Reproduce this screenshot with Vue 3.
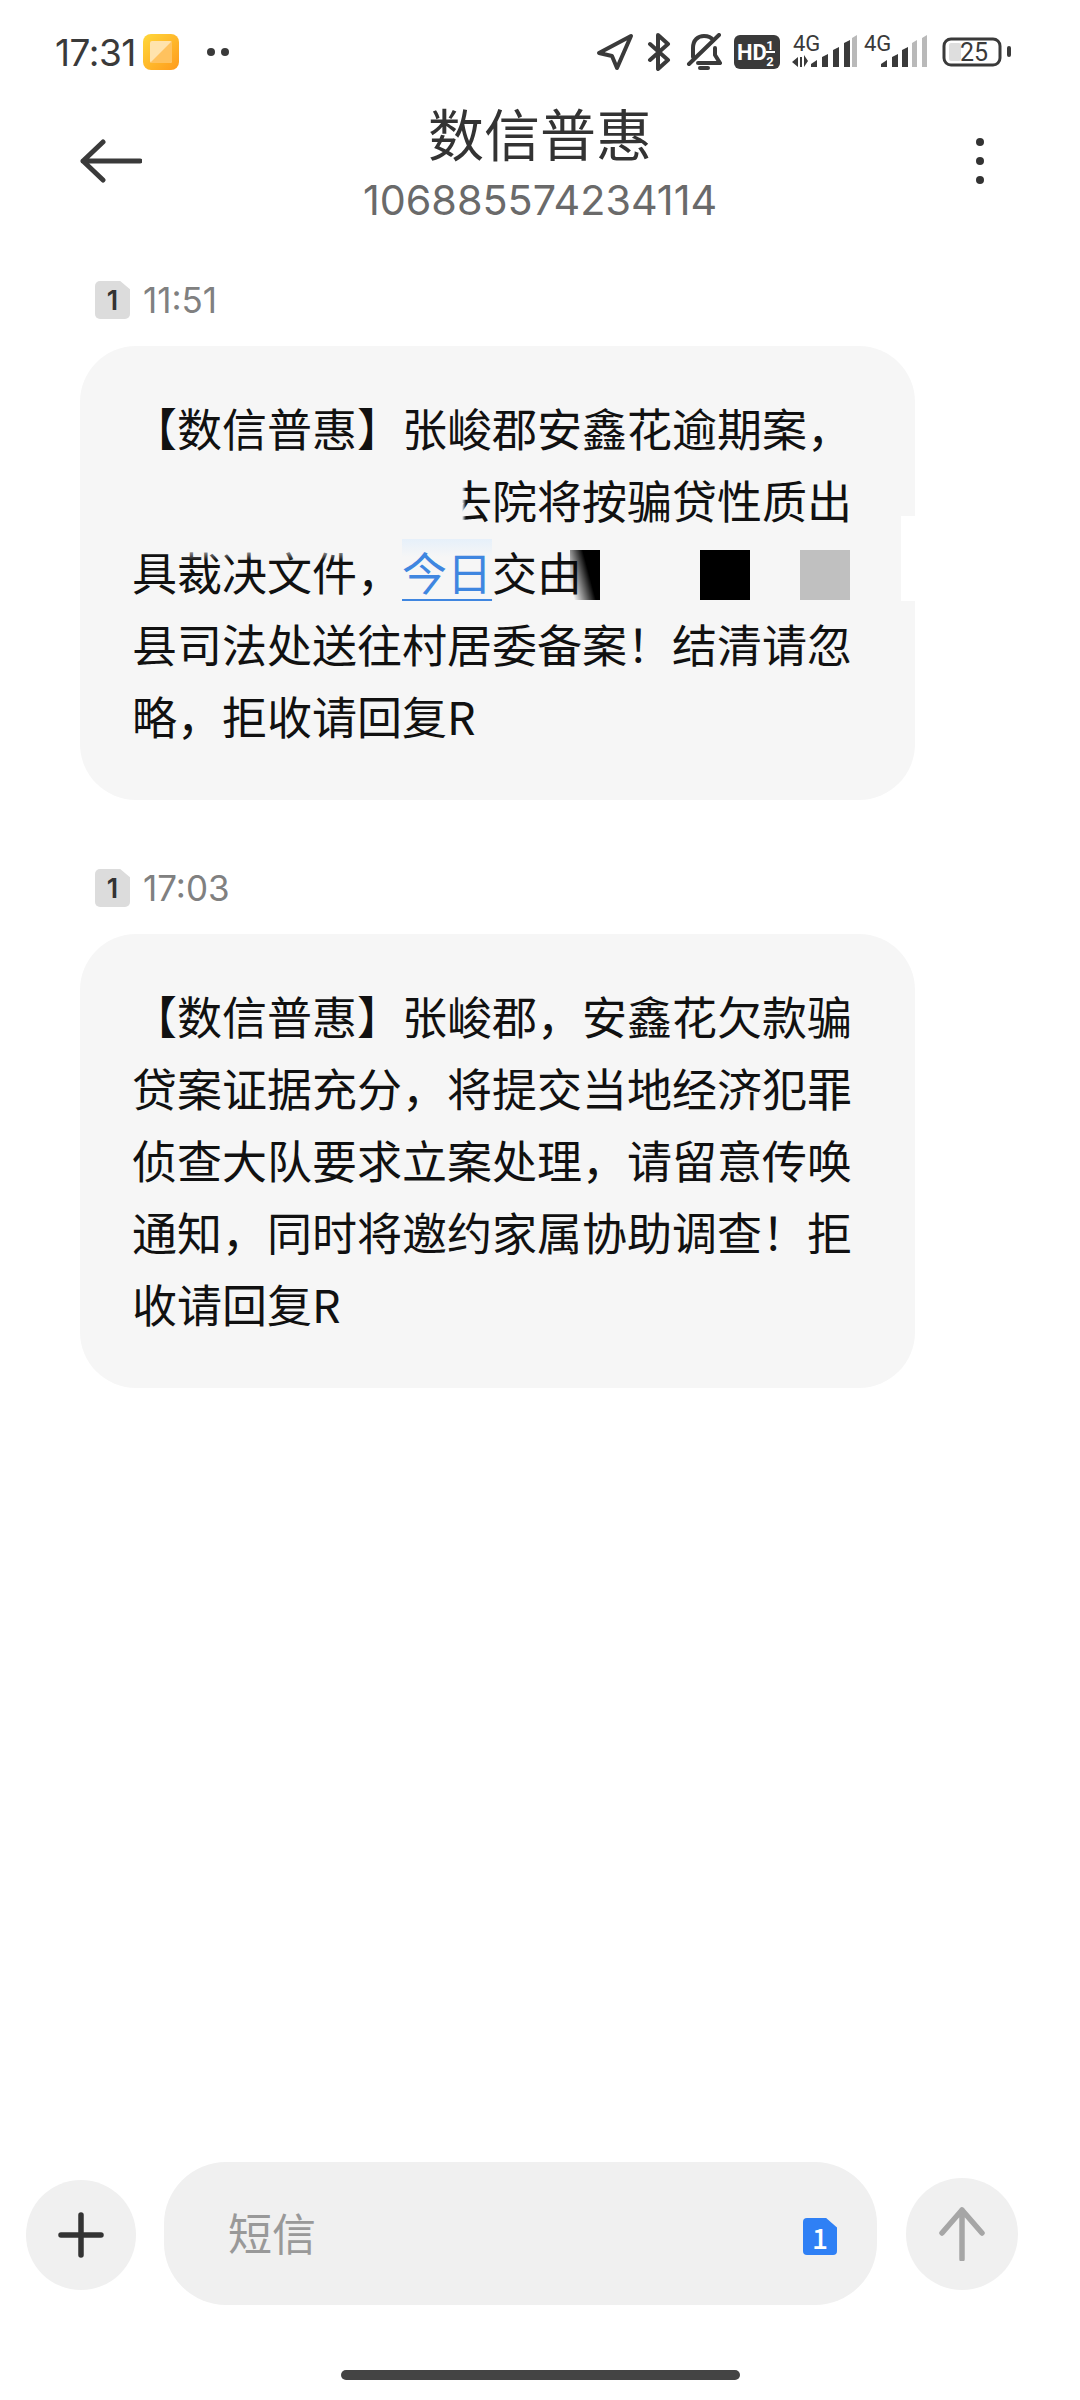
<template>
  <div class="screen">
    <div class="status">
      <span class="clock">17:31</span>
      <svg class="notes" width="36" height="36" viewBox="0 0 36 36">
        <defs>
          <linearGradient id="noteBg" x1="0" y1="0" x2="1" y2="1">
            <stop offset="0" stop-color="#ffd83a" />
            <stop offset="1" stop-color="#ff9a1c" />
          </linearGradient>
        </defs>
        <rect width="36" height="36" rx="8" fill="url(#noteBg)" />
        <rect x="7" y="7" width="22" height="22" rx="2" fill="#ffe3ad" />
        <path d="M7 29 L29 7 L29 27 Q29 29 27 29 Z" fill="#ffc25e" />
      </svg>
      <span class="dot"></span>
      <span class="dot"></span>

      <div class="status-right">
        <svg width="38" height="38" viewBox="0 0 38 38" fill="none" stroke="#3a3a3a" stroke-width="4" stroke-linejoin="round">
          <path d="M3 20 L35 3 L21 35 L16 23 Z" />
        </svg>
        <svg class="ml" width="24" height="38" viewBox="0 0 24 38" fill="none" stroke="#3a3a3a" stroke-width="4" stroke-linecap="round" stroke-linejoin="round">
          <path d="M3 11 L21 27 L11 36 L11 2 L21 11 L3 27" />
        </svg>
        <svg class="ml2" width="36" height="38" viewBox="0 0 36 38" fill="none" stroke="#3a3a3a" stroke-width="4" stroke-linecap="round" stroke-linejoin="round">
          <path d="M7 24 L7 15 C7 7 12 3 18 3 C22 3 25 4 27 7" />
          <path d="M29 15 L29 22 L34 30 L12 30" />
          <path d="M3 31 L33 2" />
          <path d="M14 35 L22 35" />
        </svg>
        <svg class="ml-hd" width="46" height="34" viewBox="0 0 46 34">
          <rect width="46" height="34" rx="6" fill="#3a3a3a" />
          <text x="3" y="25" class="hd">HD</text>
          <text x="36" y="15" class="hd-small">1</text>
          <rect x="32" y="16" width="9" height="2" fill="#fff" />
          <text x="36" y="31" class="hd-small">2</text>
        </svg>
        <svg class="ml3" width="65" height="44" viewBox="0 -4 65 44">
          <text x="1" y="17" class="net">4G</text>
          <path d="M6 23 V33 L0 28 Z M12 21 V33 L16 27 Z" fill="#3a3a3a" />
          <rect x="8" y="23" width="2" height="10" fill="#3a3a3a" />
          <path d="M19 30 L25 26 V33 H19 Z M30 23 L36 20 V33 H30 Z M41 16 L47 13 V33 H41 Z M52 9 L58 6 V33 H52 Z" fill="#3a3a3a" />
          <path d="M60 4 L65 1 V33 H60 Z" fill="#b9b9b9" />
        </svg>
        <svg class="ml4" width="64" height="44" viewBox="0 -4 64 44">
          <text x="1" y="17" class="net">4G</text>
          <path d="M18 30 L24 26 V33 H18 Z M29 23 L35 20 V33 H29 Z M39 16 L45 13 V33 H39 Z" fill="#3a3a3a" />
          <path d="M49 9 L54 6 V33 H49 Z M59 4 L64 1 V33 H59 Z" fill="#b9b9b9" />
        </svg>
        <svg class="ml5" width="69" height="30" viewBox="0 0 69 30">
          <rect x="2" y="2" width="56" height="26" rx="7" fill="none" stroke="#3a3a3a" stroke-width="3" />
          <rect x="7" y="6" width="12" height="18" rx="2" fill="#dedede" />
          <text x="32" y="24" class="bat">25</text>
          <rect x="65" y="9" width="4" height="11" rx="2" fill="#3a3a3a" />
        </svg>
      </div>
    </div>

    <div class="header">
      <svg class="back" width="62" height="44" viewBox="0 0 62 44" fill="none" stroke="#3a3a3a" stroke-width="5" stroke-linecap="round" stroke-linejoin="round">
        <path d="M60 22 H3 M23 3 L3 22 L23 41" />
      </svg>
      <div class="title-box">
        <div class="title">数信普惠</div>
        <div class="number">106885574234114</div>
      </div>
      <div class="more">
        <span></span><span></span><span></span>
      </div>
    </div>

    <div class="msg-list">
      <div class="msg">
        <div class="stamp">
          <span class="sim">1</span>
          <span>11:51</span>
        </div>
        <div class="bubble">
          <div class="line">【数信普惠】张峻郡安鑫花逾期案，</div>
          <div class="line blanked">去院将按骗贷性质出</div>
          <div class="line">具裁决文件，<span class="link">今日</span>交由</div>
          <div class="line">县司法处送往村居委备案！结清请忽</div>
          <div class="line">略，拒收请回复R</div>
          <!-- redaction marks left on the screenshot -->
          <span class="mask mask-fade"></span>
          <span class="mask mask-strip"></span>
          <span class="mask mask-black1"></span>
          <span class="mask mask-black2"></span>
          <span class="mask mask-grey"></span>
          <span class="mask mask-white"></span>
        </div>
      </div>

      <div class="msg">
        <div class="stamp">
          <span class="sim">1</span>
          <span>17:03</span>
        </div>
        <div class="bubble">
          <div v-for="(l, i) in secondLines" :key="i" class="line">{{ l }}</div>
        </div>
      </div>
    </div>

    <div class="composer">
      <button class="round plus">
        <svg width="46" height="46" viewBox="0 0 46 46" stroke="#333" stroke-width="5.5" stroke-linecap="round">
          <path d="M23 3 V43 M3 23 H43" />
        </svg>
      </button>
      <div class="input">
        <span class="placeholder">短信</span>
        <span class="sim-blue">1</span>
      </div>
      <button class="round send">
        <svg width="46" height="54" viewBox="0 0 46 54" fill="none" stroke="#a6a6a6" stroke-width="5.5" stroke-linecap="round" stroke-linejoin="round">
          <path d="M23 52 V3 M3 26 L23 3 L43 26" />
        </svg>
      </button>
    </div>
    <div class="home-bar"></div>
  </div>
</template>

<script setup>
const secondLines = [
  '【数信普惠】张峻郡，安鑫花欠款骗',
  '贷案证据充分，将提交当地经济犯罪',
  '侦查大队要求立案处理，请留意传唤',
  '通知，同时将邀约家属协助调查！拒',
  '收请回复R',
];
</script>

<style>
html, body { background: #fff; }
</style>

<style scoped>
.screen { width: 1080px; height: 2400px; display: flex; flex-direction: column; overflow: hidden; background: #fff; font-family: "Noto Sans CJK SC", "Noto Sans", sans-serif; }

.status { height: 104px; display: flex; align-items: center; padding: 0 69px 0 55px; color: #3a3a3a; }
.clock { font-family: Inter, sans-serif; font-size: 37px; line-height: 1; letter-spacing: -0.5px; }
.notes { margin-left: 7px; }
.dot { width: 8px; height: 8px; border-radius: 50%; background: #3a3a3a; margin-left: 6px; }
.notes + .dot { margin-left: 28px; }
.status-right { margin-left: auto; display: flex; align-items: center; }
.ml { margin-left: 13px; }
.ml2 { margin-left: 15px; }
.ml-hd { margin-left: 12px; }
.ml3 { margin-left: 12px; }
.ml4 { margin-left: 6px; }
.ml5 { margin-left: 15px; }
.hd { font: 700 22px Roboto, sans-serif; fill: #fff; }
.hd-small { font: 700 13px Roboto, sans-serif; fill: #fff; text-anchor: middle; }
.net { font: 400 22px Roboto, sans-serif; fill: #3a3a3a; }
.bat { font: 400 25px Roboto, sans-serif; fill: #3a3a3a; text-anchor: middle; }

.header { height: 150px; display: grid; grid-template-columns: 1fr auto 1fr; align-items: center; padding: 0 80px; }
.back { margin-top: -36px; }
.title-box { align-self: start; text-align: center; margin-top: -6px; }
.title { font-size: 56px; line-height: 68px; color: #333; }
.number { font-family: Inter, sans-serif; font-size: 41.3px; line-height: 50px; color: #6a6a6a; margin-top: 9px; }
.more { justify-self: end; display: flex; flex-direction: column; gap: 11px; margin: -36px 16px 0 0; }
.more span { width: 8px; height: 8px; border-radius: 50%; background: #333; }

.msg-list { padding: 27px 0 0 80px; display: flex; flex-direction: column; gap: 69px; }
.stamp { display: flex; align-items: center; height: 38px; padding-left: 15px; gap: 13px; color: #808080; font-family: Inter, sans-serif; font-size: 35px; }
.sim { width: 35px; height: 38px; display: flex; align-items: center; justify-content: center; background: #dcdcdc; color: #333; font-size: 27px; font-weight: 600; border-radius: 5px; clip-path: polygon(0 0, 72% 0, 100% 22%, 100% 100%, 0 100%); }
.bubble { position: relative; width: 835px; height: 454px; margin-top: 27px; padding: 46px 0 0 52px; box-sizing: border-box; background: #f6f6f6; border-radius: 56px; }
.line { height: 72px; line-height: 72px; font-size: 45px; color: #111; white-space: nowrap; }
.blanked { padding-left: 7em; }
.link { color: #3f86e0; text-decoration: underline; text-underline-offset: 8px; text-decoration-thickness: 2px; background: linear-gradient(180deg, #e6f0fa, rgba(230, 240, 250, 0) 28%); }

.mask { position: absolute; }
.mask-fade { left: 360px; top: 122px; width: 26px; height: 60px; background: linear-gradient(90deg, #f6f6f6 85%, rgba(246, 246, 246, 0)); }
.mask-strip { left: 90px; top: 190px; width: 230px; height: 24px; background: linear-gradient(180deg, #f6f6f6 40%, rgba(246, 246, 246, 0)); }
.mask-black1 { left: 490px; top: 204px; width: 30px; height: 50px; background: linear-gradient(75deg, rgba(0, 0, 0, 0) 10%, #000 60%); }
.mask-black2 { left: 620px; top: 204px; width: 50px; height: 50px; background: #000; }
.mask-grey { left: 720px; top: 204px; width: 50px; height: 50px; background: #c0c0c0; }
.mask-white { right: 0; top: 170px; width: 14px; height: 85px; background: #fff; }

.composer { margin-top: auto; display: flex; align-items: center; padding-left: 26px; }
.round { width: 110px; height: 110px; padding: 0; border: 0; border-radius: 50%; background: #f0f0f0; display: flex; align-items: center; justify-content: center; }
.plus { margin-top: 3px; }
.send { width: 112px; height: 112px; margin-left: 29px; }
.input { width: 713px; height: 143px; margin-left: 28px; padding: 0 40px 0 64px; box-sizing: border-box; display: flex; align-items: center; justify-content: space-between; background: #f0f0f0; border-radius: 62px; }
.placeholder { font-size: 44px; color: #999; margin-top: -3px; }
.sim-blue { width: 34px; height: 37px; margin-top: 6px; display: flex; align-items: center; justify-content: center; background: #2f80f5; color: #fff; font-size: 28px; font-weight: 500; border-radius: 4px; clip-path: polygon(0 0, 68% 0, 100% 26%, 100% 100%, 0 100%); }
.home-bar { align-self: center; width: 399px; height: 10px; margin: 65px 0 20px; border-radius: 5px; background: #444; }
</style>
